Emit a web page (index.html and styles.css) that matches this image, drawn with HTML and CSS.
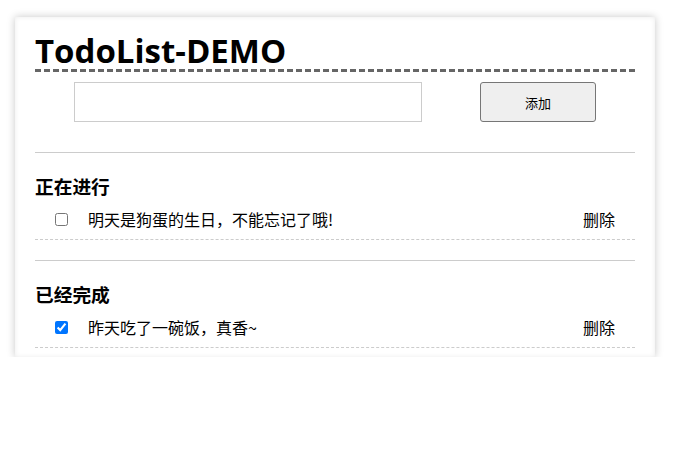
FILE: index.html
```html
<!DOCTYPE html>
<html lang="zh">
<head>
<meta charset="utf-8">
<title>TodoList-DEMO</title>
<link rel="stylesheet" href="styles.css">
</head>
<body>
<div class="card">
  <h1 class="title">TodoList-DEMO</h1>
  <div class="add-bar">
    <input class="add-input" type="text">
    <button class="add-btn">添加</button>
  </div>
  <section class="group">
    <h3 class="group-title">正在进行</h3>
    <div class="item">
      <input class="item-check" type="checkbox">
      <span class="item-text">明天是狗蛋的生日，不能忘记了哦!</span>
      <span class="item-del">删除</span>
    </div>
  </section>
  <section class="group">
    <h3 class="group-title">已经完成</h3>
    <div class="item">
      <input class="item-check" type="checkbox" checked>
      <span class="item-text">昨天吃了一碗饭，真香~</span>
      <span class="item-del">删除</span>
    </div>
  </section>
</div>
</body>
</html>
```

FILE: styles.css
```css
html, body {
  margin: 0;
  padding: 0;
  background: #fff;
}
body {
  font-family: "Noto Sans", "Noto Sans CJK SC", sans-serif;
  color: #000;
}
.card {
  width: 600px;
  margin: 17px 0 0 15px;
  padding: 15px 20px 9px;
  background: #fff;
  box-shadow: 0 0 8px rgba(0, 0, 0, 0.22), inset 0 0 5px rgba(0, 0, 0, 0.08);
}
.title {
  margin: 0;
  font-size: 33px;
  line-height: 37px;
  font-weight: 700;
  border-bottom: 3px dashed #666;
  font-family: "Open Sans", "Noto Sans CJK SC", sans-serif;
}
.add-bar {
  display: flex;
  align-items: center;
  margin-top: 10px;
  padding-left: 39px;
  gap: 58px;
}
.add-input {
  box-sizing: border-box;
  width: 348px;
  height: 40px;
  border: 1px solid #ccc;
  margin: 0;
  padding: 0 8px;
  outline: none;
}
.add-btn {
  box-sizing: border-box;
  width: 116px;
  height: 40px;
  margin: 0;
  border: 1px solid #767676;
  border-radius: 3px;
  background: #efefef;
  font-size: 13px;
  font-family: "Noto Sans CJK SC", sans-serif;
  color: #000;
}
.group {
  border-top: 1px solid #ccc;
  margin-top: 30px;
}
.group + .group {
  margin-top: 20px;
}
.group-title {
  margin: 20px 0 0;
  font-size: 18.72px;
  line-height: 26px;
  font-weight: 700;
  font-family: "Noto Sans CJK SC", sans-serif;
}
.item {
  display: flex;
  align-items: center;
  height: 40px;
  border-bottom: 1px dashed #ccc;
  font-size: 16px;
  font-family: "Noto Sans CJK SC", sans-serif;
}
.item-check {
  width: 13px;
  height: 13px;
  margin: 0 0 0 20px;
}
.item-text {
  flex: 1;
  margin-left: 20px;
}
.item-del {
  margin-right: 20px;
}
```
